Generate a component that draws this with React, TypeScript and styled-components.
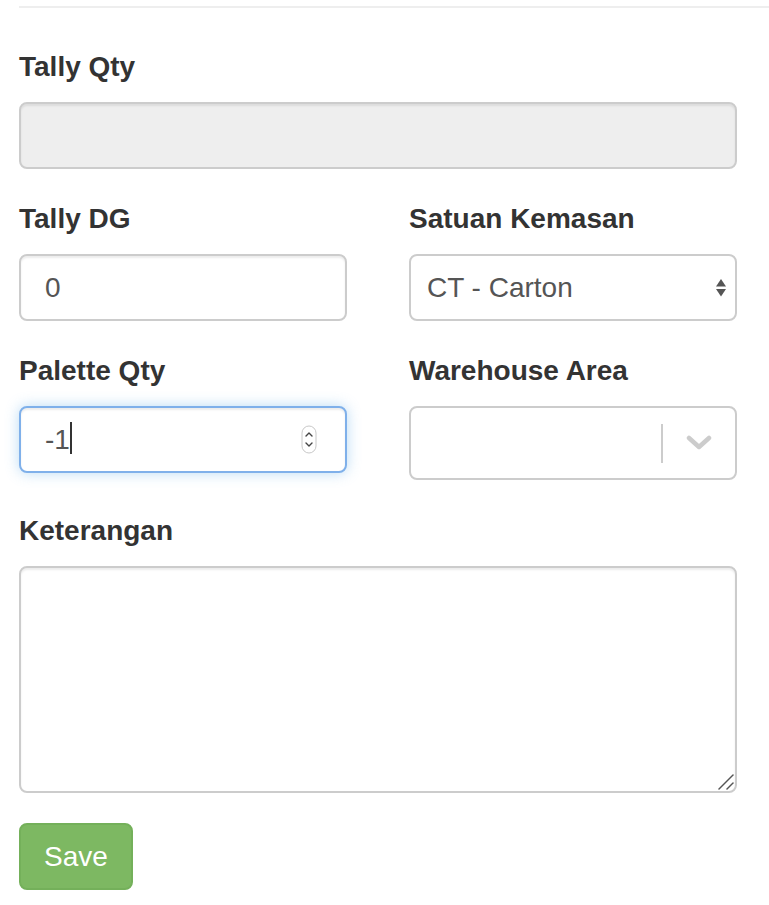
import React from "react";
import styled, { createGlobalStyle } from "styled-components";

const GlobalStyle = createGlobalStyle`
  html, body { margin: 0; padding: 0; background: #fff; }
  body {
    font-family: "Liberation Sans", Arial, Helvetica, sans-serif;
    font-size: 28px;
    color: #333;
  }
  * { box-sizing: border-box; }
`;

const Page = styled.div`
  padding: 6px 0 40px 19px;
  width: 769px;
`;

const Divider = styled.hr`
  margin: 0 0 39px 0;
  border: 0;
  border-top: 2px solid #eee;
  height: 0;
`;

const Form = styled.form`
  width: 718px;
  display: flex;
  flex-direction: column;
`;

const Row = styled.div`
  display: grid;
  grid-template-columns: 328px 328px;
  column-gap: 62px;
`;

const Group = styled.div<{ $gap?: number }>`
  display: flex;
  flex-direction: column;
  margin-bottom: ${(p) => (p.$gap ?? 30)}px;
`;

const Label = styled.label`
  font-weight: 700;
  font-size: 28px;
  line-height: 40px;
  color: #333;
  margin-bottom: 15px;
`;

const TextInput = styled.input<{ $focused?: boolean }>`
  width: 100%;
  height: 67px;
  padding: 0 24px;
  font-family: inherit;
  font-size: 28px;
  color: #555;
  background: ${(p) => (p.disabled ? "#eee" : "#fff")};
  border: 2px solid ${(p) => (p.$focused ? "#7fb0ea" : "#ccc")};
  border-radius: 8px;
  box-shadow: ${(p) =>
    p.$focused
      ? "inset 0 2px 2px rgba(0,0,0,.075), 0 0 14px rgba(102,175,233,.45)"
      : "inset 0 2px 2px rgba(0,0,0,.075)"};
  outline: none;
  -moz-appearance: textfield;
  &::-webkit-inner-spin-button,
  &::-webkit-outer-spin-button {
    -webkit-appearance: none;
    margin: 0;
  }
`;

const FieldWrap = styled.div`
  position: relative;
  width: 100%;
`;

const Caret = styled.span`
  position: absolute;
  left: 51px;
  top: 16px;
  width: 2px;
  height: 32px;
  background: #333;
`;

const Spinner = styled.svg`
  position: absolute;
  right: 30px;
  top: 19px;
`;

const NativeSelect = styled.select`
  width: 100%;
  height: 67px;
  padding: 0 40px 0 16px;
  font-family: inherit;
  font-size: 28px;
  color: #555;
  background: #fff;
  border: 2px solid #ccc;
  border-radius: 8px;
  appearance: none;
  -webkit-appearance: none;
  outline: none;
`;

const SelectArrows = styled.svg`
  position: absolute;
  right: 9px;
  top: 24px;
  pointer-events: none;
`;

const ComboBox = styled.div`
  display: flex;
  align-items: center;
  height: 74px;
  border: 2px solid #ccc;
  border-radius: 8px;
  background: #fff;
`;

const ComboValue = styled.div`
  flex: 1;
`;

const ComboSeparator = styled.span`
  width: 2px;
  height: 39px;
  background: #ccc;
`;

const ComboIndicator = styled.div`
  width: 72px;
  display: flex;
  align-items: center;
  justify-content: center;
`;

const TextArea = styled.textarea`
  width: 100%;
  height: 227px;
  padding: 12px 24px;
  font-family: inherit;
  font-size: 28px;
  color: #555;
  border: 2px solid #ccc;
  border-radius: 8px;
  box-shadow: inset 0 2px 2px rgba(0,0,0,.075);
  resize: none;
  outline: none;
  display: block;
`;

const ResizeGrip = styled.svg`
  position: absolute;
  right: 3px;
  bottom: 3px;
  pointer-events: none;
`;

const SaveButton = styled.button`
  align-self: flex-start;
  height: 67px;
  padding: 0 23px;
  font-family: inherit;
  font-size: 28px;
  color: #fff;
  background: #7db862;
  border: 2px solid #74b05a;
  border-radius: 8px;
  cursor: pointer;
`;

export default function App() {
  return (
    <>
      <GlobalStyle />
      <Page>
        <Divider />
        <Form onSubmit={(e) => e.preventDefault()}>
          <Group>
            <Label>Tally Qty</Label>
            <TextInput type="text" disabled />
          </Group>
          <Row>
            <Group>
              <Label>Tally DG</Label>
              <TextInput type="text" defaultValue="0" />
            </Group>
            <Group>
              <Label>Satuan Kemasan</Label>
              <FieldWrap>
                <NativeSelect defaultValue="CT">
                  <option value="CT">CT - Carton</option>
                </NativeSelect>
                <SelectArrows width="14" height="20" viewBox="0 0 14 20">
                  <path d="M7 1 L12 8.5 L2 8.5 Z" fill="#555" />
                  <path d="M2 11 L12 11 L7 18.5 Z" fill="#555" />
                </SelectArrows>
              </FieldWrap>
            </Group>
          </Row>
          <Row>
            <Group $gap={31}>
              <Label>Palette Qty</Label>
              <FieldWrap>
                <TextInput type="number" defaultValue="-1" $focused />
                <Caret />
                <Spinner width="16" height="29" viewBox="0 0 16 29">
                  <rect x="1" y="1" width="14" height="27" rx="7" fill="#fff" stroke="#c8c8c8" strokeWidth="1" />
                  <path d="M5 11 L8 8 L11 11" fill="none" stroke="#444" strokeWidth="1.4" strokeLinecap="round" strokeLinejoin="round" />
                  <path d="M5 18 L8 21 L11 18" fill="none" stroke="#444" strokeWidth="1.4" strokeLinecap="round" strokeLinejoin="round" />
                </Spinner>
              </FieldWrap>
            </Group>
            <Group $gap={31}>
              <Label>Warehouse Area</Label>
              <ComboBox>
                <ComboValue />
                <ComboSeparator />
                <ComboIndicator>
                  <svg width="26" height="16" viewBox="0 0 26 16">
                    <path d="M3 3 L13 12 L23 3" fill="none" stroke="#ccc" strokeWidth="4.5" strokeLinecap="round" strokeLinejoin="round" />
                  </svg>
                </ComboIndicator>
              </ComboBox>
            </Group>
          </Row>
          <Group>
            <Label>Keterangan</Label>
            <FieldWrap>
              <TextArea />
              <ResizeGrip width="16" height="16" viewBox="0 0 16 16">
                <path d="M1 15 L15 1" stroke="#555" strokeWidth="1.5" strokeLinecap="round" />
                <path d="M9 15 L15 9" stroke="#555" strokeWidth="1.5" strokeLinecap="round" />
              </ResizeGrip>
            </FieldWrap>
          </Group>
          <SaveButton type="submit">Save</SaveButton>
        </Form>
      </Page>
    </>
  );
}
